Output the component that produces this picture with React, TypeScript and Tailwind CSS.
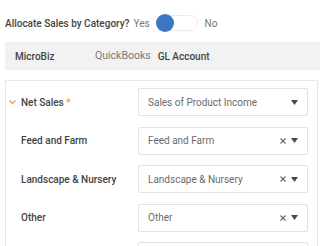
const rows = [
  { label: "Feed and Farm", value: "Feed and Farm" },
  { label: "Landscape & Nursery", value: "Landscape & Nursery" },
  { label: "Other", value: "Other" },
];

function Caret() {
  return (
    <svg width="7" height="5" viewBox="0 0 7 5" className="shrink-0">
      <path d="M0 0h7L3.5 5z" fill="#4a4a4a" />
    </svg>
  );
}

function Clear() {
  return (
    <svg width="6" height="6" viewBox="0 0 6 6" className="shrink-0">
      <path d="M0.5 0.5l5 5M5.5 0.5l-5 5" stroke="#666" strokeWidth="1.1" />
    </svg>
  );
}

function Select({ value, clearable }: { value: string; clearable?: boolean }) {
  return (
    <div className="flex h-[28px] w-[170px] items-center rounded-[2px] border border-[#e2e2e2] pl-[9px] pr-[9px]">
      <span className="flex-1 truncate text-[10px] text-[#6b6b6b]">{value}</span>
      {clearable && (
        <span className="mr-[5px] flex">
          <Clear />
        </span>
      )}
      <Caret />
    </div>
  );
}

export default function App() {
  return (
    <div className="h-[246px] w-[320px] overflow-hidden bg-white font-['Roboto',sans-serif]">
      {/* Allocate toggle */}
      <div className="mt-[14px] flex h-[18px] items-center pl-[5px] text-[10px]">
        <span className="font-medium text-[#444]">Allocate Sales by Category?</span>
        <span className="ml-[4px] text-[#777]">Yes</span>
        <div className="relative ml-[6px] h-[16px] w-[42px] rounded-full border border-[#ececec] bg-white">
          <div className="absolute left-[-1px] top-[-2px] h-[18px] w-[18px] rounded-full bg-[#3b76c2]" />
        </div>
        <span className="ml-[7px] text-[#777]">No</span>
      </div>

      {/* Column header */}
      <div className="ml-[5px] mt-[10px] flex h-[28px] items-center bg-[#f2f2f2] text-[10px]">
        <span className="ml-[10px] w-[80px] font-medium text-[#444]">MicroBiz</span>
        <span className="text-[10.5px] text-[#777]">QuickBooks</span>
        <span className="ml-[7px] font-medium text-[#444]">GL Account</span>
      </div>

      {/* Mapping panel */}
      <div className="ml-[5px] mt-[10px] w-[313px] border border-[#e8e8e8] pt-[7px]">
        <div className="flex flex-col gap-[10.5px] pr-[9px]">
          <div className="flex items-center">
            <svg width="7" height="5" viewBox="0 0 7 5" className="ml-[3px] mr-[5px]">
              <path d="M0.5 0.5l3 3 3-3" stroke="#f0a030" strokeWidth="1.2" fill="none" />
            </svg>
            <span className="flex-1 text-[10px] font-medium text-[#444]">
              Net Sales <span className="text-[#f5a623]">*</span>
            </span>
            <Select value="Sales of Product Income" />
          </div>
          {rows.map((r) => (
            <div key={r.label} className="flex items-center">
              <span className="ml-[15px] flex-1 text-[10px] font-medium text-[#444]">{r.label}</span>
              <Select value={r.value} clearable />
            </div>
          ))}
          <div className="flex items-center">
            <span className="flex-1" />
            <Select value="" />
          </div>
        </div>
      </div>
    </div>
  );
}
